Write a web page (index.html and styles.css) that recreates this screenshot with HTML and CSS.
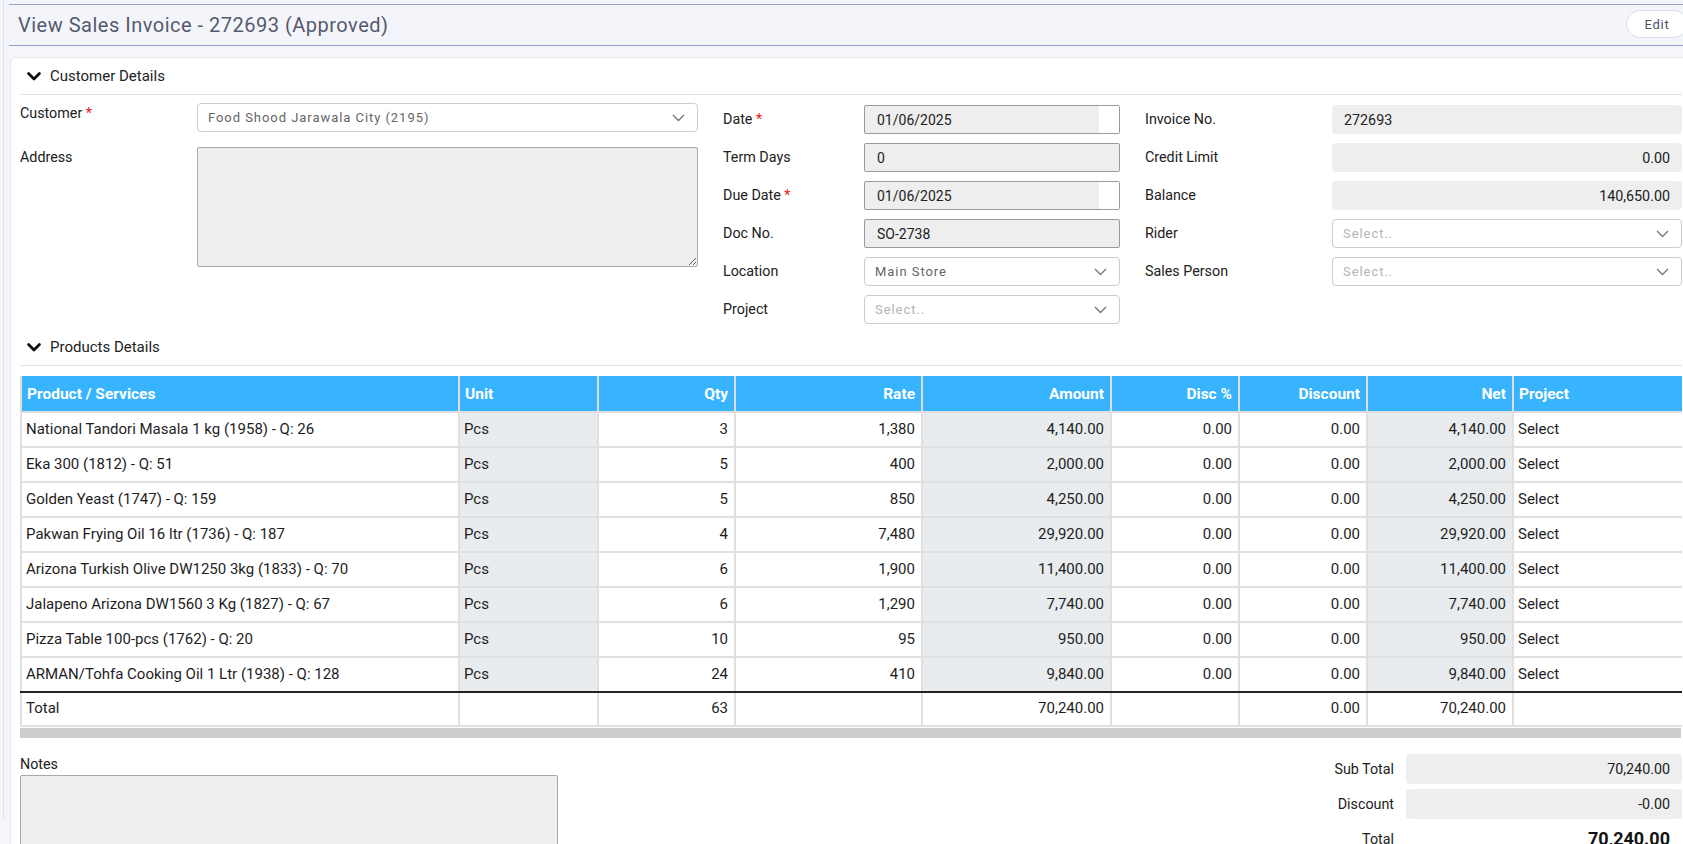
FILE: index.html
```html
<!DOCTYPE html>
<html lang="en">
<head>
<meta charset="utf-8">
<title>View Sales Invoice - 272693 (Approved)</title>
<link rel="stylesheet" href="styles.css">
</head>
<body>
<div class="page">
  <div class="rail"></div>
  <div class="main">
    <header class="titlebar">
      <h1 class="title">View Sales Invoice - 272693 (Approved)</h1>
      <button class="edit-btn">Edit</button>
    </header>

    <section class="card">
      <div class="section-head">
        <svg class="head-chev" width="14" height="9" viewBox="0 0 14 9"><path d="M1.6 1.6 L7 7 L12.4 1.6" fill="none" stroke="#111" stroke-width="2.8" stroke-linecap="round" stroke-linejoin="round"/></svg>
        <span>Customer Details</span>
      </div>

      <div class="form-grid">
        <div class="col col-1">
          <div class="row top">
            <label class="lbl lbl-1">Customer <span class="req">*</span></label>
            <div class="ctl ctl-select">
              <span>Food Shood Jarawala City (2195)</span>
              <svg width="13" height="8" viewBox="0 0 13 8"><path d="M1 1 L6.5 6.5 L12 1" fill="none" stroke="#777" stroke-width="1.4"/></svg>
            </div>
          </div>
          <div class="row top">
            <label class="lbl lbl-1">Address</label>
            <textarea class="ctl address" readonly></textarea>
          </div>
        </div>

        <div class="col col-2">
          <div class="row">
            <label class="lbl lbl-2">Date <span class="req">*</span></label>
            <div class="ctl ctl-input date"><span class="val">01/06/2025</span><span class="pick"></span></div>
          </div>
          <div class="row">
            <label class="lbl lbl-2">Term Days</label>
            <div class="ctl ctl-input"><span class="val">0</span></div>
          </div>
          <div class="row">
            <label class="lbl lbl-2">Due Date <span class="req">*</span></label>
            <div class="ctl ctl-input date"><span class="val">01/06/2025</span><span class="pick"></span></div>
          </div>
          <div class="row">
            <label class="lbl lbl-2">Doc No.</label>
            <div class="ctl ctl-input"><span class="val">SO-2738</span></div>
          </div>
          <div class="row">
            <label class="lbl lbl-2">Location</label>
            <div class="ctl ctl-select">
              <span>Main Store</span>
              <svg width="13" height="8" viewBox="0 0 13 8"><path d="M1 1 L6.5 6.5 L12 1" fill="none" stroke="#777" stroke-width="1.4"/></svg>
            </div>
          </div>
          <div class="row">
            <label class="lbl lbl-2">Project</label>
            <div class="ctl ctl-select">
              <span class="ph">Select..</span>
              <svg width="13" height="8" viewBox="0 0 13 8"><path d="M1 1 L6.5 6.5 L12 1" fill="none" stroke="#777" stroke-width="1.4"/></svg>
            </div>
          </div>
        </div>

        <div class="col col-3">
          <div class="row">
            <label class="lbl lbl-3">Invoice No.</label>
            <div class="ctl ctl-ro">272693</div>
          </div>
          <div class="row">
            <label class="lbl lbl-3">Credit Limit</label>
            <div class="ctl ctl-ro num">0.00</div>
          </div>
          <div class="row">
            <label class="lbl lbl-3">Balance</label>
            <div class="ctl ctl-ro num">140,650.00</div>
          </div>
          <div class="row">
            <label class="lbl lbl-3">Rider</label>
            <div class="ctl ctl-select">
              <span class="ph">Select..</span>
              <svg width="13" height="8" viewBox="0 0 13 8"><path d="M1 1 L6.5 6.5 L12 1" fill="none" stroke="#777" stroke-width="1.4"/></svg>
            </div>
          </div>
          <div class="row">
            <label class="lbl lbl-3">Sales Person</label>
            <div class="ctl ctl-select">
              <span class="ph">Select..</span>
              <svg width="13" height="8" viewBox="0 0 13 8"><path d="M1 1 L6.5 6.5 L12 1" fill="none" stroke="#777" stroke-width="1.4"/></svg>
            </div>
          </div>
        </div>
      </div>

      <div class="section-head products-head">
        <svg class="head-chev" width="14" height="9" viewBox="0 0 14 9"><path d="M1.6 1.6 L7 7 L12.4 1.6" fill="none" stroke="#111" stroke-width="2.8" stroke-linecap="round" stroke-linejoin="round"/></svg>
        <span>Products Details</span>
      </div>

      <div class="table-wrap">
        <table class="grid">
          <colgroup>
            <col class="c-prod"><col class="c-unit"><col class="c-qty"><col class="c-rate"><col class="c-amt"><col class="c-dp"><col class="c-disc"><col class="c-net"><col class="c-proj">
          </colgroup>
          <thead>
            <tr>
              <th>Product / Services</th><th>Unit</th><th class="r">Qty</th><th class="r">Rate</th><th class="r">Amount</th><th class="r">Disc %</th><th class="r">Discount</th><th class="r">Net</th><th>Project</th>
            </tr>
          </thead>
          <tbody>
            <tr><td>National Tandori Masala 1 kg (1958) - Q: 26</td><td class="g">Pcs</td><td class="r">3</td><td class="r">1,380</td><td class="r g">4,140.00</td><td class="r">0.00</td><td class="r">0.00</td><td class="r g">4,140.00</td><td>Select</td></tr>
            <tr><td>Eka 300 (1812) - Q: 51</td><td class="g">Pcs</td><td class="r">5</td><td class="r">400</td><td class="r g">2,000.00</td><td class="r">0.00</td><td class="r">0.00</td><td class="r g">2,000.00</td><td>Select</td></tr>
            <tr><td>Golden Yeast (1747) - Q: 159</td><td class="g">Pcs</td><td class="r">5</td><td class="r">850</td><td class="r g">4,250.00</td><td class="r">0.00</td><td class="r">0.00</td><td class="r g">4,250.00</td><td>Select</td></tr>
            <tr><td>Pakwan Frying Oil 16 ltr (1736) - Q: 187</td><td class="g">Pcs</td><td class="r">4</td><td class="r">7,480</td><td class="r g">29,920.00</td><td class="r">0.00</td><td class="r">0.00</td><td class="r g">29,920.00</td><td>Select</td></tr>
            <tr><td>Arizona Turkish Olive DW1250 3kg (1833) - Q: 70</td><td class="g">Pcs</td><td class="r">6</td><td class="r">1,900</td><td class="r g">11,400.00</td><td class="r">0.00</td><td class="r">0.00</td><td class="r g">11,400.00</td><td>Select</td></tr>
            <tr><td>Jalapeno Arizona DW1560 3 Kg (1827) - Q: 67</td><td class="g">Pcs</td><td class="r">6</td><td class="r">1,290</td><td class="r g">7,740.00</td><td class="r">0.00</td><td class="r">0.00</td><td class="r g">7,740.00</td><td>Select</td></tr>
            <tr><td>Pizza Table 100-pcs (1762) - Q: 20</td><td class="g">Pcs</td><td class="r">10</td><td class="r">95</td><td class="r g">950.00</td><td class="r">0.00</td><td class="r">0.00</td><td class="r g">950.00</td><td>Select</td></tr>
            <tr class="last"><td>ARMAN/Tohfa Cooking Oil 1 Ltr (1938) - Q: 128</td><td class="g">Pcs</td><td class="r">24</td><td class="r">410</td><td class="r g">9,840.00</td><td class="r">0.00</td><td class="r">0.00</td><td class="r g">9,840.00</td><td>Select</td></tr>
          </tbody>
          <tfoot>
            <tr><td>Total</td><td></td><td class="r">63</td><td></td><td class="r">70,240.00</td><td></td><td class="r">0.00</td><td class="r">70,240.00</td><td></td></tr>
          </tfoot>
        </table>
      </div>
      <div class="hscroll"></div>

      <div class="bottom">
        <div class="notes">
          <label class="lbl notes-lbl">Notes</label>
          <textarea class="notes-box" readonly></textarea>
        </div>
        <div class="totals">
          <span class="t-lbl">Sub Total</span><div class="t-val">70,240.00</div>
          <span class="t-lbl">Discount</span><div class="t-val">-0.00</div>
          <span class="t-lbl">Total</span><div class="t-grand">70,240.00</div>
        </div>
      </div>
    </section>
  </div>
</div>
</body>
</html>
```

FILE: styles.css
```css
html, body {
  margin: 0;
  height: 844px;
  overflow: hidden;
}
body {
  background: #f5f6fa;
  font-family: Roboto, "Liberation Sans", Arial, sans-serif;
  color: #222;
}
.page {
  display: flex;
  width: 1720px;
}
.rail {
  flex: none;
  width: 3px;
  border-right: 1px solid #e0e2ec;
  margin-right: 5px;
  height: 820px;
}
.main {
  flex: 1;
  padding-top: 4px;
}

/* title bar */
.titlebar {
  height: 40px;
  border-top: 1px solid #9c9ec9;
  border-bottom: 1px solid #9c9ec9;
  background: #f4f5fa;
  display: flex;
  align-items: center;
  justify-content: space-between;
  padding: 0 32px 0 9px;
}
.title {
  margin: 0;
  font-size: 20px;
  font-weight: 400;
  color: #545a6d;
  letter-spacing: 0.5px;
}
.edit-btn {
  width: 62px;
  height: 28px;
  margin-top: -2px;
  border: 1px solid #d5dcef;
  border-radius: 14px;
  background: #fff;
  font-family: Roboto, "Liberation Sans", sans-serif;
  font-size: 13px;
  letter-spacing: 0.8px;
  color: #4b5064;
  padding: 0;
}

/* card */
.card {
  margin: 11px 0 0 1px;
  width: 1662px;
  padding: 0 30px 40px 9px;
  background: #fff;
  border: 1px solid #e6e8f0;
  border-radius: 6px 0 0 0;
}
.section-head {
  display: flex;
  align-items: center;
  gap: 9px;
  height: 36px;
  padding-left: 7px;
  border-bottom: 1px solid #e3e3e3;
  font-size: 15px;
  color: #222;
}
.head-chev {
  flex: none;
}
.products-head {
  margin-top: 5px;
}

/* form */
.form-grid {
  display: flex;
  margin-top: 8px;
}
.col {
  display: flex;
  flex-direction: column;
  gap: 9px;
}
.col-1 {
  width: 678px;
  gap: 15px;
}
.col-2 {
  width: 397px;
  margin-left: 25px;
  padding-top: 2px;
}
.col-3 {
  width: 537px;
  margin-left: 25px;
  padding-top: 2px;
}
.row {
  display: flex;
  align-items: center;
}
.row.top {
  align-items: flex-start;
}
.lbl {
  flex: none;
  font-size: 14.3px;
  line-height: 17px;
  color: #212121;
}
.lbl-1 { width: 177px; padding-top: 2px; }
.lbl-2 { width: 141px; }
.lbl-3 { width: 187px; }
.req { color: #e8141b; }

.ctl {
  flex: 1;
  box-sizing: border-box;
  height: 29px;
  min-width: 0;
}
.ctl-select {
  display: flex;
  align-items: center;
  justify-content: space-between;
  padding: 0 12px 0 10px;
  border: 1px solid #cccccc;
  border-radius: 4px;
  background: #fff;
  font-size: 13px;
  letter-spacing: 0.95px;
  color: #666;
}
.ctl-select .ph {
  color: #b5b5b5;
}
.ctl-input {
  display: flex;
  align-items: center;
  border: 1px solid #9a9a9a;
  border-radius: 2px;
  background: #eeeeee;
  font-size: 14px;
  color: #222;
}
.ctl-input .val {
  flex: 1;
  padding-left: 12px;
}
.ctl-input .pick {
  width: 20px;
  align-self: stretch;
  background: #fff;
}
.ctl-ro {
  display: flex;
  align-items: center;
  padding: 0 12px;
  border-radius: 4px;
  background: #eeeeee;
  font-size: 14.3px;
  color: #222;
}
.ctl-ro.num {
  justify-content: flex-end;
}
.address {
  height: 120px;
  margin: 0;
  border: 1px solid #a8a8a8;
  border-radius: 2px;
  background: #eeeeee;
  padding: 4px;
  font-family: inherit;
}

/* table */
.table-wrap {
  margin-top: 10px;
  width: 1662px;
  overflow: hidden;
}
.grid {
  table-layout: fixed;
  width: 1692px;
  border-collapse: collapse;
  font-size: 15px;
  color: #1e1e1e;
}
.c-prod { width: 438px; }
.c-unit { width: 139px; }
.c-qty { width: 137px; }
.c-rate { width: 187px; }
.c-amt { width: 189px; }
.c-dp { width: 128px; }
.c-disc { width: 128px; }
.c-net { width: 146px; }
.c-proj { width: 200px; }
.grid th {
  background: #37b4fd;
  color: #fff;
  font-size: 15.5px;
  font-weight: 700;
  text-align: left;
  padding: 9px 6px 8px 5px;
  line-height: 18px;
  border: 2px solid #dedede;
  border-top: none;
}
.grid th.r {
  padding-right: 6px;
}
.grid td {
  padding: 7px 6px 7px 4px;
  line-height: 19px;
  border: 2px solid #e0e0e0;
  white-space: nowrap;
  overflow: hidden;
}
.grid td.g {
  background: #e9ecef;
}
.grid .r {
  text-align: right;
}
.grid tbody tr.last td {
  border-bottom-color: #222;
}
.grid tfoot td {
  padding: 6px 6px 7px 4px;
  line-height: 19px;
  border-top: 2px solid #222;
}
.hscroll {
  margin-top: 1px;
  width: 1661px;
  height: 10px;
  background: #cdcdcd;
}

/* bottom */
.bottom {
  display: flex;
  justify-content: space-between;
  align-items: flex-start;
  margin-top: 16px;
}
.notes {
  width: 538px;
  display: flex;
  flex-direction: column;
}
.notes-lbl {
  padding-top: 2px;
}
.notes-box {
  margin: 2px 0 0 0;
  height: 110px;
  border: 1px solid #a8a8a8;
  border-radius: 2px;
  background: #eeeeee;
  font-family: inherit;
}
.totals {
  display: grid;
  grid-template-columns: 160px 276px;
  column-gap: 12px;
  row-gap: 5px;
  align-items: center;
}
.t-lbl {
  text-align: right;
  font-size: 14.3px;
  color: #212121;
}
.t-val {
  height: 30px;
  line-height: 30px;
  padding: 0 12px;
  border-radius: 4px;
  background: #eeeeee;
  text-align: right;
  font-size: 14.3px;
  color: #222;
}
.t-grand {
  height: 30px;
  line-height: 30px;
  padding: 0 12px;
  text-align: right;
  font-size: 18px;
  font-weight: 700;
  color: #111;
}
```
